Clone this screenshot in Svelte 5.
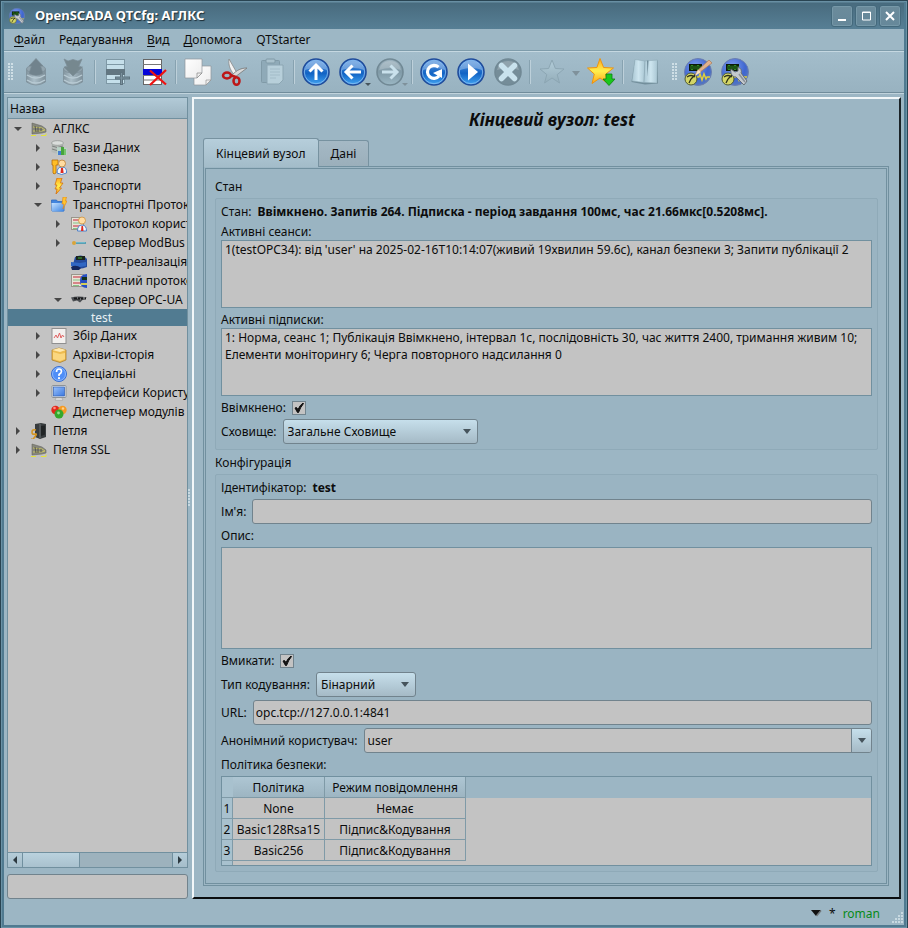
<script>
  let stateEnabled = $state(true);
  let turnOn = $state(true);
  let storage = $state('Загальне Сховище');
  let encoding = $state('Бінарний');
  let name = $state('');
  let descr = $state('');
  let filter = $state('');
  let url = $state('opc.tcp://127.0.0.1:4841');
  let anonUser = $state('user');
  let activeTab = $state(0);
  let selected = $state('test');

  let sessions = "1(testOPC34): від 'user' на 2025-02-16T10:14:07(живий 19хвилин 59.6с), канал безпеки 3; Запити публікації 2";
  let subscriptions = '1: Норма, сеанс 1; Публікація Ввімкнено, інтервал 1с, послідовність 30, час життя 2400, тримання живим 10; Елементи моніторингу 6; Черга повторного надсилання 0';

  const menus = [['Ф', 'айл'], ['', 'Редагування'], ['В', 'ид'], ['Д', 'опомога'], ['', 'QTStarter']];

  const tools = [
    { icon: 'grip' },
    { icon: 'load', label: 'Завантажити' },
    { icon: 'save', label: 'Зберегти' },
    { icon: 'sep' },
    { icon: 'add', label: 'Додати' },
    { icon: 'del', label: 'Видалити' },
    { icon: 'sep' },
    { icon: 'copy', label: 'Копіювати' },
    { icon: 'cut', label: 'Вирізати' },
    { icon: 'paste', label: 'Вставити' },
    { icon: 'sep' },
    { icon: 'up', label: 'Вгору' },
    { icon: 'back', label: 'Назад', more: true },
    { icon: 'forward', label: 'Вперед', more: true, off: true },
    { icon: 'sep' },
    { icon: 'refresh', label: 'Оновити' },
    { icon: 'start', label: 'Запустити' },
    { icon: 'stop', label: 'Зупинити' },
    { icon: 'sep' },
    { icon: 'star', label: 'Обране' },
    { icon: 'drop', label: 'Список обраного' },
    { icon: 'staradd', label: 'Додати в обране' },
    { icon: 'sep' },
    { icon: 'manual', label: 'Посібник' },
    { icon: 'grip' },
    { icon: 'vision', label: 'Vision' },
    { icon: 'config', label: 'QTCfg' }
  ];

  // level, arrow (o - opened, c - closed), icon, text
  const tree = [
    { level: 0, arrow: 'o', icon: 'station', text: 'АГЛКС' },
    { level: 1, arrow: 'c', icon: 'db', text: 'Бази Даних' },
    { level: 1, arrow: 'c', icon: 'security', text: 'Безпека' },
    { level: 1, arrow: 'c', icon: 'transport', text: 'Транспорти' },
    { level: 1, arrow: 'o', icon: 'protocol', text: 'Транспортні Протоколи' },
    { level: 2, arrow: 'c', icon: 'userprt', text: 'Протокол користувача' },
    { level: 2, arrow: 'c', icon: 'modbus', text: 'Сервер ModBus' },
    { level: 2, arrow: '', icon: 'http', text: 'HTTP-реалізація' },
    { level: 2, arrow: '', icon: 'self', text: 'Власний протокол' },
    { level: 2, arrow: 'o', icon: 'opc', text: 'Сервер OPC-UA' },
    { level: 3, arrow: '', icon: '', text: 'test' },
    { level: 1, arrow: 'c', icon: 'daq', text: 'Збір Даних' },
    { level: 1, arrow: 'c', icon: 'archive', text: 'Архіви-Історія' },
    { level: 1, arrow: 'c', icon: 'special', text: 'Спеціальні' },
    { level: 1, arrow: 'c', icon: 'ui', text: 'Інтерфейси Користувача' },
    { level: 1, arrow: '', icon: 'modules', text: 'Диспетчер модулів' },
    { level: 0, arrow: 'c', icon: 'loop', text: 'Петля' },
    { level: 0, arrow: 'c', icon: 'station', text: 'Петля SSL' }
  ];

  const policies = [
    ['None', 'Немає'],
    ['Basic128Rsa15', 'Підпис&Кодування'],
    ['Basic256', 'Підпис&Кодування']
  ];
</script>

{#snippet scada(tool)}
  <circle cx="14" cy="14" r="13.5" fill="url(#gScada)" stroke="#6c7fae" />
  <rect x="5" y="6" width="13" height="7" fill="#0b1a08" />
  <path d="M7 7.500h2v4h-2zM11 7.500v4M13 7.500h2v4h-2zM17 8v4" fill="none" stroke="#2f8a22" stroke-width="1" />
  <path d="M12 19h3l1-3 2 6 2-6 2 5 1-2h3" fill="none" stroke="#e0cf3c" stroke-width="1.500" />
  <circle cx="7" cy="21" r="6" fill="#d3d566" stroke="#4f5a35" />
  <path d="M3 19q4-3 8 0M7 21l4-4M7 21l-2 4" fill="none" stroke="#2c3019" stroke-width="1.300" />
  {#if tool === 'brush'}
    <path d="M25 2l3 3L15 15l-4 2 2-4z" fill="#e0b18d" stroke="#a77b5c" stroke-width="0.700" />
    <path d="M14 12l3 2-6 4z" fill="#f7e2c3" />
  {:else}
    <path d="M10 11l4 3 3-1 0-4c3 1 4 4 3 6l6 8-3 4-8-8c-4 0-6-4-5-8z" fill="#c4c9ce" stroke="#5f686f" stroke-width="0.900" />
    <path d="M18 16l6 8" stroke="#8b9399" stroke-width="1.500" />
  {/if}
{/snippet}

{#snippet toolIcon(kind)}
  <svg width="28" height="28" viewBox="0 0 28 28" aria-hidden="true">
    {#if kind === 'load' || kind === 'save'}
      <path d="M4.500 11v13q9.500 6 19 0V11z" fill="url(#gDb)" stroke="#7d8f99" stroke-width="0.800" />
      <ellipse cx="14" cy="11" rx="9.500" ry="4" fill="#93a5af" stroke="#7d8f99" stroke-width="0.800" />
      <path d="M5 17q9 6 18 0M5 22q9 6 18 0" fill="none" stroke="#b8cad3" stroke-width="1.500" />
      {#if kind === 'load'}
        <path d="M14 0.500l7 7.500h-2.500l2.500 7.500q-7 4-14 0L9.500 8H7z" fill="#71838d" stroke="#7b8d97" stroke-width="0.700" />
      {:else}
        <path d="M5 1l4 2 5-1.500L19 3l4-2-3.500 8h4L14 18 5 9h3.500z" fill="#76888f" stroke="#7b8d97" stroke-width="0.700" />
      {/if}
    {:else if kind === 'add'}
      <rect x="3.500" y="1.500" width="18" height="24" fill="#c5dfea" stroke="#7e98a5" />
      <path d="M3 6.500h19M3 16.500h19M3 21.500h19" stroke="#7e98a5" />
      <rect x="3" y="11" width="19" height="6" fill="#627681" />
      <path d="M18.500 14v13M12 20h15" stroke="#5f7480" stroke-width="3" />
      <path d="M18.500 15v11M13 20h13" stroke="#7b929e" stroke-width="1" />
    {:else if kind === 'del'}
      <rect x="3.500" y="1.500" width="18" height="25" fill="#fff" stroke="#666" />
      <path d="M3 6.500h19M3 17.500h19M3 22h19" stroke="#777" />
      <rect x="3" y="11" width="19" height="6" fill="#0505d8" />
      <path d="M10 12.500l16 14M26 12L10 27" stroke="#ef1212" stroke-width="2.300" />
    {:else if kind === 'copy'}
      <path d="M10 8h17v14l-5 5H10z" fill="url(#gPaper)" stroke="#8f979b" stroke-width="0.700" />
      <path d="M27 22l-5 5v-5z" fill="#eee" stroke="#888" stroke-width="0.600" />
      <path d="M1 1h17v14l-5 5H1z" fill="url(#gPaper)" stroke="#8f979b" stroke-width="0.700" />
      <path d="M18 15l-5 5v-5z" fill="#eee" stroke="#888" stroke-width="0.700" />
    {:else if kind === 'cut'}
      <path d="M8 1l8 14-2 3C10 13 7 8 8 1z" fill="#f2f2f2" stroke="#888" stroke-width="0.800" />
      <path d="M26 10L14 19l-3-2C16 12 20 10 26 10z" fill="#d9d9d9" stroke="#777" stroke-width="0.800" />
      <ellipse cx="6" cy="17.500" rx="4" ry="3" fill="none" stroke="#bd1717" stroke-width="2.500" />
      <ellipse cx="15.500" cy="23" rx="3" ry="3.800" fill="none" stroke="#bd1717" stroke-width="2.500" />
      <path d="M9 17l6 2" stroke="#bd1717" stroke-width="2.500" />
    {:else if kind === 'paste'}
      <rect x="3.500" y="2.500" width="18" height="22" rx="1" fill="#8faab8" stroke="#809aa7" />
      <rect x="8" y="1" width="9" height="4" rx="1" fill="#a9c1cc" stroke="#809aa7" />
      <path d="M9 7h16v15l-4 4H9z" fill="#b7cfda" stroke="#8ca6b3" />
      <path d="M12 11h10M12 14h10M12 17h10M12 20h6" stroke="#a3bcc8" />
    {:else if kind === 'up' || kind === 'back' || kind === 'refresh' || kind === 'start'}
      <circle cx="14" cy="14" r="13" fill="url(#gBlue)" stroke="#204c9b" stroke-width="1.600" />
      <circle cx="14" cy="14" r="11.700" fill="none" stroke="#8fc0f1" stroke-width="0.800" />
      <path d="M3 12Q5 3 14 3t11 9q-10-4-22 0z" fill="#fff" opacity="0.300" />
      {#if kind === 'up'}
        <path d="M14 22V8M7.500 13.500L14 7l6.500 6.500" fill="none" stroke="#fff" stroke-width="3" />
      {:else if kind === 'back'}
        <path d="M22 14H8M13.500 7.500L7 14l6.500 6.500" fill="none" stroke="#fff" stroke-width="3" />
      {:else if kind === 'refresh'}
        <path d="M18.500 9.200A6.500 6.500 0 1 0 19 18" fill="none" stroke="#fff" stroke-width="3.200" />
        <path d="M22 11v9l-9-5z" fill="#fff" />
      {:else}
        <path d="M11 5.500L21 14l-10 8.500z" fill="#fff" />
      {/if}
    {:else if kind === 'forward' || kind === 'stop'}
      <circle cx="14" cy="14" r="13" fill={kind === 'stop' ? '#758d99' : 'url(#gOff)'} stroke="#718995" stroke-width="1.600" />
      <path d="M3 12Q5 3 14 3t11 9q-10-4-22 0z" fill="#fff" opacity="0.200" />
      {#if kind === 'stop'}
        <path d="M7.500 7.500l13 13M20.500 7.500l-13 13" stroke="#c9e2ed" stroke-width="5.500" stroke-linecap="round" />
      {:else}
        <path d="M6 14h14M14.500 7.500L21 14l-6.500 6.500" fill="none" stroke="#c9e1ec" stroke-width="3" />
      {/if}
    {:else if kind === 'star'}
      <path d="M14 2l3.400 8.500 8.600.500-6.800 5.600 2.300 8.400L14 20l-7.500 5 2.300-8.400L2 11l8.600-.500z" fill="url(#gStarOff)" stroke="#8ca6b3" />
    {:else if kind === 'staradd'}
      <path d="M13 0.500l3.600 9 9.900.500-7.800 6.100 2.500 9.400L13 20l-8 5.500 2.300-9.400L0.500 10l9.400-.500z" fill="url(#gGold)" stroke="#ec9411" />
      <path d="M19 16h6v5h3l-6 6.500-6-6.500h3z" fill="#19c71c" stroke="#0b820f" stroke-width="0.800" />
    {:else if kind === 'manual'}
      <path d="M4 2l10 1.500L27 2.500v23L14 26.500 0.500 24z" fill="#728e9b" />
      <path d="M4 1.500l10 1.500-1 21.500L1 23z" fill="url(#gBook)" stroke="#8ba6b2" stroke-width="0.500" />
      <path d="M14 3l12.500-1L26 25l-13-0.500z" fill="url(#gBook)" stroke="#8ba6b2" stroke-width="0.500" />
      <path d="M16 2.500l0.500 16 1-16z" fill="#6f8b99" />
    {:else if kind === 'vision'}
      {@render scada('brush')}
    {:else if kind === 'config'}
      {@render scada('wrench')}
    {/if}
  </svg>
{/snippet}

{#snippet treeIcon(kind)}
  <svg width="16" height="16" viewBox="0 0 16 16" aria-hidden="true">
    {#if kind === 'station'}
      <path d="M1 2l10 3 4 3v3l-4 1-10 1z" fill="#86877c" stroke="#66675f" stroke-width="0.600" />
      <path d="M2 6l9 1 3 2-3 1H2" fill="none" stroke="#c6c264" />
      <path d="M4 5l1 6M7 6v5M10 7v3" stroke="#55564e" />
      <path d="M0 14.500h5M10 14.500h5v-2" fill="none" stroke="#e3e23c" />
    {:else if kind === 'db'}
      <path d="M0.500 3v9q5 3 12 1V3z" fill="#b7bcb9" />
      <ellipse cx="6.500" cy="3" rx="6" ry="2.300" fill="#dadddb" stroke="#858a87" stroke-width="0.600" />
      <path d="M1 6q5 3 11 0M1 9q5 3 10 0" fill="none" stroke="#7d827f" />
      <path d="M6 7l10 1v7H6z" fill="#b9d3c6" />
      <path d="M7 11h3v4H7z" fill="#467dd0" />
      <path d="M10 7h3v8h-3z" fill="#46a53b" />
      <path d="M13 9h2v6h-2z" fill="#76c36d" />
    {:else if kind === 'security'}
      <path d="M1 1h6v5H5v8l-2 1-1-1V6H1z" fill="#ffbd25" stroke="#b46c0b" stroke-width="0.800" />
      <path d="M6 14q0-6 5-6t4.500 6q-5 3-9.500 0z" fill="#f5f7fb" stroke="#4e80c8" />
      <circle cx="11" cy="4.500" r="3.500" fill="#ffdca2" stroke="#bd7e31" stroke-width="0.800" />
      <path d="M10 9h2l.600 5H9.500z" fill="#de2a20" />
    {:else if kind === 'transport'}
      <path d="M6 0h5L9.500 5 12 5 8.500 10h2L5 16l1-5H4l2-4H4z" fill="url(#gGold)" stroke="#d4700d" stroke-width="0.800" />
    {:else if kind === 'protocol'}
      <path d="M0.500 3h5l1 1.500H13V14H1z" fill="#4286df" stroke="#2f69bd" stroke-width="0.800" />
      <path d="M0.500 6h13l-1 8.500H1z" fill="url(#gFolder)" />
      <path d="M12 0h3.500l-1 4h1.500l-4 8 1-5h-2z" fill="#ffc52e" stroke="#df8115" stroke-width="0.600" />
    {:else if kind === 'userprt' || kind === 'self'}
      <rect x="0.500" y="1.500" width="12" height="12" fill="#e8e4d8" stroke="#99958b" />
      <path d="M2 4h9M2 10h9" stroke="#d78488" stroke-width="2" />
      <path d="M2 7h9M2 12.500h6" stroke="#83c386" />
      {#if kind === 'userprt'}
        <path d="M6.500 15q0-6 4.500-6t4.500 6z" fill="#f5f7fb" stroke="#4e80c8" />
        <circle cx="11" cy="4.500" r="3.500" fill="#ffdca2" stroke="#cd9342" stroke-width="0.800" />
        <path d="M10.500 10h1.500l.500 5h-2.500z" fill="#de2a20" />
      {:else}
        <path d="M16 1q-7 0-7 7t7 7z" fill="#274fc3" />
        <path d="M11 4h5v3h-5z" fill="#12311c" />
        <path d="M10 11h6" stroke="#d4ce57" stroke-width="2" />
      {/if}
    {:else if kind === 'modbus'}
      <circle cx="3" cy="8" r="2" fill="#d9a43a" />
      <path d="M5 8h10" stroke="#4c9bb2" stroke-width="1.800" />
      <path d="M5 7.500h9" stroke="#79c3d4" stroke-width="0.700" />
    {:else if kind === 'http'}
      <path d="M4 3q7-4 12 2v8q-6 3-15 1z" fill="#244b9d" />
      <path d="M5 2h9v4H5z" fill="#1a241c" />
      <path d="M7 4h4" stroke="#3daf36" />
      <path d="M0 8l9 1 6-1v4l-6 1-9-1z" fill="#3067c4" />
      <path d="M0 13q5-3 10 1l-2 2H1z" fill="#14275e" />
    {:else if kind === 'opc'}
      <path d="M0 5.500q7-2 16 0l-4 2-3 3-3-2-4 1z" fill="#4c4f53" />
      <path d="M3 6.500h12" stroke="#17191b" stroke-width="2" />
      <path d="M6 6h1M9 7h1M12 6h2" stroke="#b7b9bb" />
    {:else if kind === 'daq'}
      <rect x="1" y="0.500" width="14" height="15" fill="#f2f0ee" stroke="#8f8f8f" />
      <path d="M3 10l2-3 1.500 3L8.500 5 10 10l1.500-3L13 9" fill="none" stroke="#e06161" />
    {:else if kind === 'archive'}
      <path d="M1 3l7-2 7 2v10l-6 2.500L1 13z" fill="#eebc50" stroke="#a97a20" stroke-width="0.700" />
      <path d="M1 3l8 2 6-2-7-2z" fill="#ffe9b0" />
      <path d="M2 5l7 2 5-1v6l-5 2-7-2z" fill="#fbd77f" />
    {:else if kind === 'special'}
      <circle cx="8" cy="8" r="7.500" fill="#4f8ef7" stroke="#386ed1" />
      <circle cx="8" cy="8" r="6.500" fill="none" stroke="#a5c8ff" stroke-width="0.700" />
      <path d="M5.500 6q0-3 2.500-3t2.500 2.500Q10.500 7 8 8.500v1.500" fill="none" stroke="#fff" stroke-width="1.600" />
      <circle cx="8" cy="12.200" r="1.100" fill="#fff" />
    {:else if kind === 'ui'}
      <rect x="1" y="0.500" width="14" height="12" rx="1" fill="#e9ebed" stroke="#8d9296" />
      <rect x="2.500" y="2" width="11" height="9" fill="url(#gScreen)" stroke="#315fb2" stroke-width="0.700" />
      <path d="M5 13h6l1 2H4z" fill="#f4f4f4" stroke="#999" stroke-width="0.600" />
    {:else if kind === 'modules'}
      <circle cx="4.500" cy="6" r="4.200" fill="#e3281c" />
      <circle cx="11.500" cy="6" r="4.200" fill="#f59a25" />
      <circle cx="8" cy="10" r="4.500" fill="#35a82c" />
      <circle cx="3.500" cy="4" r="1.300" fill="#ff8f83" />
      <circle cx="12" cy="4.500" r="1.200" fill="#ffd38a" />
      <circle cx="7.500" cy="9" r="1.400" fill="#95e28b" />
    {:else if kind === 'loop'}
      <path d="M4 1l6-1 5 1v13l-6 2-5-2z" fill="#383c3e" />
      <path d="M9 1v14" stroke="#6b7174" />
      <path d="M10 3l4-.500v9L10 13z" fill="#212425" />
      <path d="M5 7q-4-1-4 2t3 2-1 4-3 0" fill="none" stroke="#d49522" stroke-width="1.600" />
    {/if}
  </svg>
{/snippet}

{#snippet check()}
  <svg class="mark" width="14" height="14" viewBox="0 0 14 14" aria-hidden="true">
    <path d="M3 7l1.500-.500 1.500 2Q8 4 11 2l.500.500Q8.500 6 6.500 11.500H5.500z" fill="#111" stroke="#111" />
  </svg>
{/snippet}

<svg class="defs" width="0" height="0" aria-hidden="true">
  <defs>
    <radialGradient id="gScada" cx="0.4" cy="0.3" r="0.8">
      <stop offset="0" stop-color="#7f9df0" /><stop offset="0.6" stop-color="#3f66d0" /><stop offset="1" stop-color="#5f7fb8" />
    </radialGradient>
    <linearGradient id="gBlue" x2="0" y2="1">
      <stop offset="0" stop-color="#5d9ae0" /><stop offset="0.55" stop-color="#1263c4" /><stop offset="1" stop-color="#42a5f2" />
    </linearGradient>
    <linearGradient id="gOff" x2="0" y2="1">
      <stop offset="0" stop-color="#9db3bf" /><stop offset="0.5" stop-color="#809aa7" /><stop offset="1" stop-color="#9bb7c4" />
    </linearGradient>
    <linearGradient id="gStarOff" x2="0" y2="1">
      <stop offset="0" stop-color="#b3cdd9" /><stop offset="1" stop-color="#93adba" />
    </linearGradient>
    <linearGradient id="gDb">
      <stop offset="0" stop-color="#82949e" /><stop offset="0.4" stop-color="#abbec8" /><stop offset="1" stop-color="#7d8f99" />
    </linearGradient>
    <linearGradient id="gPaper" x2="1" y2="1">
      <stop offset="0" stop-color="#fff" /><stop offset="1" stop-color="#ececec" />
    </linearGradient>
    <linearGradient id="gGold" x2="0" y2="1">
      <stop offset="0" stop-color="#ffa51c" /><stop offset="0.5" stop-color="#fff04d" /><stop offset="1" stop-color="#ffa51c" />
    </linearGradient>
    <linearGradient id="gBook">
      <stop offset="0" stop-color="#a9c6d3" /><stop offset="0.5" stop-color="#cde5ef" /><stop offset="1" stop-color="#a9c6d3" />
    </linearGradient>
    <linearGradient id="gFolder" x2="1" y2="1">
      <stop offset="0" stop-color="#c5e2ff" /><stop offset="1" stop-color="#3983e3" />
    </linearGradient>
    <linearGradient id="gScreen" x2="1" y2="1">
      <stop offset="0" stop-color="#9ac2fa" /><stop offset="1" stop-color="#3a77e0" />
    </linearGradient>
  </defs>
</svg>

<div class="window">
  <header class="title">
    <svg width="16" height="16" viewBox="0 0 28 28" aria-hidden="true">{@render scada('wrench')}</svg>
    <h1>OpenSCADA QTCfg: АГЛКС</h1>
    <button aria-label="Згорнути"><svg width="12" height="12"><path d="M2 9h8v2H2z" fill="#fff" /></svg></button>
    <button aria-label="Розгорнути"><svg width="12" height="12"><path d="M2.500 2h8v8h-8zM2 2.500h9" fill="none" stroke="#fff" /></svg></button>
    <button aria-label="Закрити"><svg width="12" height="12"><path d="M2 2l8 8M10 2l-8 8" stroke="#fff" stroke-width="2" /></svg></button>
  </header>

  <nav class="menu">
    {#each menus as [key, rest]}
      <button>{#if key}<u>{key}</u>{/if}{rest}</button>
    {/each}
  </nav>

  <div class="toolbar">
    {#each tools as tool}
      {#if tool.icon === 'grip'}
        <span class="grip"></span>
      {:else if tool.icon === 'sep'}
        <span class="sep"></span>
      {:else if tool.icon === 'drop'}
        <button class="drop" aria-label={tool.label}><span class="down off"></span></button>
      {:else}
        <button class="tool" aria-label={tool.label}>
          {@render toolIcon(tool.icon)}
          {#if tool.more}<span class="down more" class:off={tool.off}></span>{/if}
        </button>
      {/if}
    {/each}
  </div>

  <div class="work">
    <aside>
      <div class="tree">
        <div class="head">Назва</div>
        <ul>
          {#each tree as item}
            <li class={'level' + item.level} class:selected={item.text === selected}>
              <span class="arrow" class:opened={item.arrow === 'o'} class:closed={item.arrow === 'c'}></span>
              {#if item.icon}{@render treeIcon(item.icon)}{/if}
              <button onclick={() => (selected = item.text)}>{item.text}</button>
            </li>
          {/each}
        </ul>
        <div class="scroll">
          <button aria-label="Ліворуч"><span class="left"></span></button>
          <div class="track"><div class="thumb"></div></div>
          <button aria-label="Праворуч"><span class="right"></span></button>
        </div>
      </div>
      <input class="field" type="text" aria-label="Пошук" bind:value={filter} />
    </aside>

    <div class="splitter"></div>

    <main>
      <h2>Кінцевий вузол: test</h2>
      <div class="tabs">
        {#each ['Кінцевий вузол', 'Дані'] as tab, i}
          <button class:active={activeTab === i} onclick={() => (activeTab = i)}>{tab}</button>
        {/each}
      </div>
      <div class="pane">
        <h3>Стан</h3>
        <section>
          <div class="row">Стан: <b>Ввімкнено. Запитів 264. Підписка - період завдання 100мс, час 21.66мкс[0.5208мс].</b></div>
          <div class="block">
            <label for="sessions">Активні сеанси:</label>
            <textarea id="sessions" readonly value={sessions}></textarea>
          </div>
          <div class="block">
            <label for="subs">Активні підписки:</label>
            <textarea id="subs" readonly value={subscriptions}></textarea>
          </div>
          <div class="row">
            <label for="enabled">Ввімкнено:</label>
            <span class="check"><input id="enabled" type="checkbox" bind:checked={stateEnabled} />{#if stateEnabled}{@render check()}{/if}</span>
          </div>
          <div class="row">
            <label for="storage">Сховище:</label>
            <span class="select wide">
              <select id="storage" bind:value={storage}><option>Загальне Сховище</option></select>
              <span class="down"></span>
            </span>
          </div>
        </section>

        <h3>Конфігурація</h3>
        <section>
          <div class="row">Ідентифікатор: <b>test</b></div>
          <div class="row">
            <label for="name">Ім'я:</label>
            <input id="name" class="field" type="text" bind:value={name} />
          </div>
          <label for="descr">Опис:</label>
          <textarea id="descr" class="tall" bind:value={descr}></textarea>
          <div class="row">
            <label for="on">Вмикати:</label>
            <span class="check"><input id="on" type="checkbox" bind:checked={turnOn} />{#if turnOn}{@render check()}{/if}</span>
          </div>
          <div class="row">
            <label for="enc">Тип кодування:</label>
            <span class="select">
              <select id="enc" bind:value={encoding}><option>Бінарний</option></select>
              <span class="down"></span>
            </span>
          </div>
          <div class="row">
            <label for="url">URL:</label>
            <input id="url" class="field" type="text" bind:value={url} />
          </div>
          <div class="row">
            <label for="anon">Анонімний користувач:</label>
            <div class="combo">
              <input id="anon" type="text" bind:value={anonUser} />
              <button aria-label="Вибрати користувача"><span class="down"></span></button>
            </div>
          </div>
          <div id="policy">Політика безпеки:</div>
          <div class="grid">
            <table aria-labelledby="policy">
              <thead>
                <tr><th class="num"></th><th class="pol">Політика</th><th class="mode">Режим повідомлення</th><th class="rest"></th></tr>
              </thead>
              <tbody>
                {#each policies as row, i}
                  <tr><th class="num">{i + 1}</th><td>{row[0]}</td><td>{row[1]}</td><td class="rest"></td></tr>
                {/each}
                <tr class="tail"><th class="num"></th><td class="rest" colspan="3"></td></tr>
              </tbody>
            </table>
          </div>
        </section>
      </div>
    </main>
  </div>

  <footer>
    <svg width="12" height="8" viewBox="0 0 12 8" aria-hidden="true">
      <path d="M1 1h10L6 7z" fill="#111" />
      <path d="M11 1.500L6.500 7" stroke="#71777a" stroke-width="1.500" />
    </svg>
    <span>*</span>
    <span class="user">roman</span>
    <svg class="size" width="12" height="12" viewBox="0 0 12 12" aria-hidden="true">
      <path d="M11 0v12M8 3v9M5 6v6M2 9v3" stroke="#c8d9e1" stroke-width="2" stroke-dasharray="2 1" />
    </svg>
  </footer>
</div>

<style>
  :global(body) {
    margin: 0;
    background: #9cb6c4;
  }

  * {
    box-sizing: border-box;
  }

  .defs {
    position: absolute;
  }

  .window {
    display: flex;
    flex-direction: column;
    min-height: 100vh;
    padding: 1px 4px 4px;
    background: #507a90;
    box-shadow: inset 0 0 0 1px #294452, inset 0 0 0 2px #6a92a6;
    color: #0c0c0c;
    font: 12px/17px "Noto Sans", sans-serif;
  }

  button, input, select, textarea {
    margin: 0;
    padding: 0;
    border: 0;
    border-radius: 0;
    background: none;
    color: inherit;
    font: inherit;
    outline: none;
  }

  .title {
    display: flex;
    align-items: center;
    gap: 2px;
    height: 28px;
    padding: 1px 3px 0 5px;
    background: linear-gradient(#688fa3 1px, #486b7e 2px, #577f95);
    color: #fff;
  }

  .title h1 {
    flex: 1;
    margin: 0 0 0 8px;
    font-size: 13px;
    text-shadow: 1px 1px 1px #1b2c36;
  }

  .title button {
    display: grid;
    place-items: center;
    width: 22px;
    height: 22px;
    border: 1px solid #44697c;
    border-radius: 3px;
    background: linear-gradient(#6b8b9b, #66889a);
    box-shadow: inset 0 0 0 1px #7698a8;
  }

  .menu {
    display: flex;
    height: 22px;
    padding-left: 3px;
    background: #9db7c5;
    border-bottom: 1px solid #7e9cab;
  }

  .menu button {
    padding: 0 7px;
  }

  .menu u {
    text-underline-offset: 2px;
  }

  .toolbar {
    display: flex;
    align-items: center;
    height: 43px;
    padding-bottom: 2px;
    border-top: 1px solid #c5d8e1;
    border-bottom: 1px solid #c0d3dc;
    box-shadow: inset 0 -1px #708c9b;
    background: linear-gradient(#a3bdcb, #98b2c0);
  }

  .tool {
    position: relative;
    display: grid;
    place-items: center;
    width: 37px;
    height: 36px;
  }

  .sep {
    width: 7px;
    height: 24px;
    background: linear-gradient(90deg, transparent 3px, #87a2b0 3px, #87a2b0 4px, #bdd0da 4px, #bdd0da 5px, transparent 5px);
  }

  .grip {
    width: 6px;
    height: 18px;
    margin: 0 3px 0 4px;
    background: radial-gradient(circle at 1px 1px, #cfdfe6 1px, transparent 1px) 0 0 / 3px 3px;
  }

  .tool ~ .grip {
    margin: 0 1px 0 9px;
  }

  .drop {
    width: 12px;
    height: 36px;
  }

  .down {
    display: inline-block;
    border: 4px solid transparent;
    border-top: 5px solid #46545c;
    border-bottom: 0;
  }

  .down.off {
    border-top-color: #7f919b;
  }

  .more {
    position: absolute;
    right: 0;
    bottom: 4px;
    border-width: 3px 3px 0;
  }

  .work {
    display: flex;
    flex: 1;
    padding: 3px 3px 2px;
    background: #9cb6c4;
  }

  aside {
    display: flex;
    flex-direction: column;
    gap: 6px;
    width: 181px;
  }

  .tree {
    display: flex;
    flex: 1;
    flex-direction: column;
    border: 1px solid #71909f;
    background: #c3c3c3;
  }

  .head {
    height: 21px;
    padding: 2px;
    border-bottom: 1px solid #71909f;
    background: linear-gradient(#b2cad7, #9cb4c1);
  }

  ul {
    flex: 1;
    margin: 0;
    padding: 0;
    list-style: none;
  }

  li {
    display: flex;
    align-items: center;
    height: 19px;
    padding-left: 3px;
    overflow: hidden;
    white-space: nowrap;
  }

  li svg {
    flex: none;
    margin: 0 6px;
  }

  .level1 {
    padding-left: 23px;
  }

  .level2 {
    padding-left: 43px;
  }

  .level3 {
    height: 17px;
    padding-left: 69px;
  }

  .selected {
    background: #517b91;
    color: #e8f0f4;
  }

  .arrow {
    display: grid;
    flex: none;
    place-items: center;
    width: 14px;
  }

  .opened::before {
    content: "";
    border: 4px solid transparent;
    border-top: 4px solid #474747;
    border-bottom: 0;
  }

  .closed::before {
    content: "";
    border: 4px solid transparent;
    border-left: 4px solid #474747;
    border-right: 0;
  }

  .scroll {
    display: flex;
    height: 15px;
    border-top: 1px solid #71909f;
    background: #9db2bd;
  }

  .scroll button {
    display: grid;
    place-items: center;
    width: 14px;
    background: linear-gradient(#b5cdd9, #a5bdca);
  }

  .left, .right {
    border: 4px solid transparent;
  }

  .left {
    border-left: 0;
    border-right: 4px solid #2c3940;
  }

  .right {
    border-right: 0;
    border-left: 4px solid #2c3940;
  }

  .track {
    flex: 1;
    border: solid #71909f;
    border-width: 0 1px;
  }

  .thumb {
    width: 38%;
    height: 100%;
    border-right: 1px solid #71909f;
    background: linear-gradient(#bad2de, #a9c1ce);
  }

  .field, .combo {
    flex: 1;
    min-width: 0;
    height: 25px;
    padding: 0 2px;
    border: 1px solid #71838d;
    border-radius: 3px;
    background: #c3c3c3;
  }

  aside .field {
    flex: none;
  }

  .splitter {
    display: flex;
    align-items: center;
    width: 4px;
  }

  .splitter::before {
    content: "";
    width: 3px;
    height: 18px;
    background: radial-gradient(circle at 1px 1px, #c9dae2 1px, transparent 1px) 0 0 / 3px 3px;
  }

  main {
    flex: 1;
    min-width: 0;
    padding: 9px 10px 11px 9px;
    border: 2px solid;
    border-color: #f2f7f9 #1b2327 #0a0d0f #f2f7f9;
  }

  h2 {
    margin: 0;
    padding-left: 12px;
    font-size: 17px;
    font-style: italic;
    line-height: 24px;
    text-align: center;
  }

  .tabs {
    display: flex;
    align-items: flex-end;
    margin-top: 6px;
  }

  .tabs button {
    height: 26px;
    padding: 0 12px;
    border: 1px solid #7792a0;
    border-left: 0;
    border-bottom: 0;
    border-radius: 0 3px 0 0;
    background: linear-gradient(#a5b9c5, #9bafbb);
  }

  .tabs .active {
    position: relative;
    height: 29px;
    margin-bottom: -1px;
    border-left: 1px solid #7792a0;
    border-radius: 3px 3px 0 0;
    background: linear-gradient(#b6cedb, #a3bcc9);
  }

  .pane {
    padding: 5px 8px 11px 9px;
    border: 3px double #71909f;
  }

  h3 {
    margin: 2px 0 0;
    font-size: 12px;
    font-weight: 400;
    line-height: 22px;
  }

  section {
    display: flex;
    flex-direction: column;
    gap: 3px;
    padding: 4px 5px 5px;
    border: 1px solid #8faab8;
    border-radius: 2px;
    background: #9ab4c2;
  }

  .row {
    display: flex;
    align-items: center;
    gap: 6px;
  }

  .block {
    display: flex;
    flex-direction: column;
  }

  textarea {
    display: block;
    width: 100%;
    height: 68px;
    padding: 0 3px;
    border: 1px solid #71909f;
    background: #c3c3c3;
    overflow: hidden;
    resize: none;
  }

  .tall {
    height: 102px;
  }

  .check {
    position: relative;
    display: flex;
  }

  .check input {
    width: 14px;
    height: 14px;
    border: 1px solid #71838d;
    background: #c3c3c3;
    appearance: none;
  }

  .mark {
    position: absolute;
    inset: 0;
    pointer-events: none;
  }

  .select {
    position: relative;
    width: 100px;
  }

  .wide {
    width: 195px;
  }

  .select select {
    display: block;
    width: 100%;
    height: 25px;
    padding: 0 4px;
    border: 1px solid #71838d;
    border-radius: 3px;
    background: linear-gradient(#c6dfeb, #a5bac6);
    appearance: none;
  }

  .select .down {
    position: absolute;
    top: 10px;
    right: 7px;
    pointer-events: none;
  }

  .combo {
    display: flex;
    padding: 0;
    overflow: hidden;
  }

  .combo input {
    flex: 1;
    min-width: 0;
    padding: 0 3px;
  }

  .combo button {
    display: grid;
    place-items: center;
    width: 20px;
    border-left: 1px solid #71838d;
    background: linear-gradient(#c6dfeb, #a5bac6);
  }

  .grid {
    border: 1px solid #71909f;
    background: #c3c3c3;
  }

  table {
    width: 100%;
    border-collapse: separate;
    border-spacing: 0;
    table-layout: fixed;
  }

  th, td {
    height: 21px;
    padding: 0;
    border: solid #7f9aa7;
    border-width: 0 1px 1px 0;
    font-weight: 400;
    text-align: center;
    white-space: nowrap;
  }

  thead th {
    background: linear-gradient(#aec6d3, #9db5c2);
  }

  .num {
    width: 11px;
    background: #a8c1ce;
  }

  thead .num {
    border-right: 0;
  }

  .pol {
    width: 92px;
  }

  .mode {
    width: 141px;
  }

  .rest {
    border: 0;
  }

  thead .rest {
    background: #9cb6c4;
  }

  .tail th, .tail td {
    height: 4px;
    border-bottom: 0;
  }

  footer {
    display: flex;
    align-items: center;
    justify-content: flex-end;
    gap: 7px;
    height: 24px;
    background: #9cb6c4;
  }

  .user {
    color: #078a18;
  }

  .size {
    align-self: flex-end;
    margin: 0 1px 1px 4px;
  }
</style>
